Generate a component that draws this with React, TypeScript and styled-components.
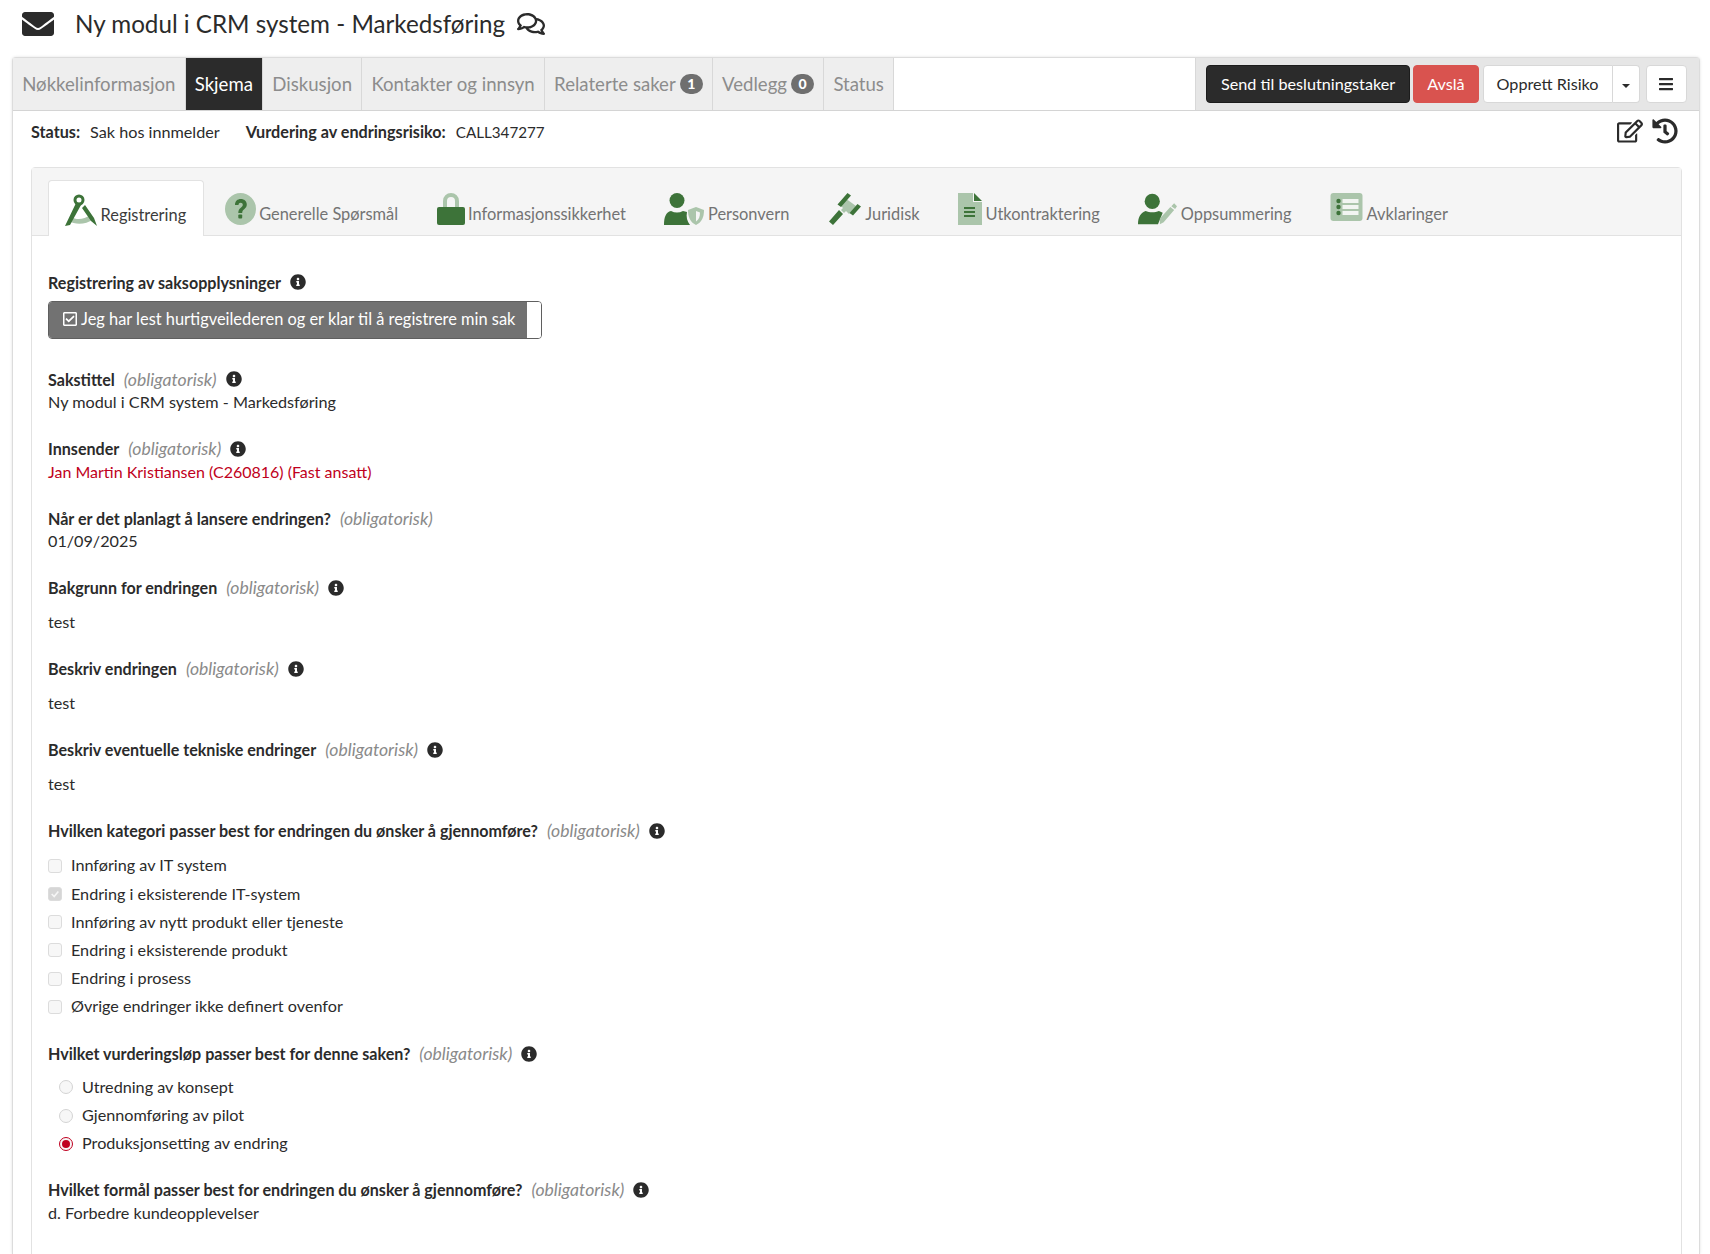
import React from "react";
import styled, { createGlobalStyle } from "styled-components";
import {
  FaBars,
  FaEnvelope,
  FaHistory,
  FaInfoCircle,
  FaRegCheckSquare,
  FaRegComments,
  FaRegEdit,
} from "react-icons/fa";

const DARK = "#3d7339";
const LIGHT = "#abc5ab";

const GlobalStyle = createGlobalStyle`
  html, body {
    margin: 0;
    height: 100%;
    overflow: hidden;
    background: #fff;
  }
  body {
    font-family: "Lato", "Open Sans", sans-serif;
    font-size: 16.2px;
    color: #2b2b2b;
  }
  * {
    box-sizing: border-box;
  }
`;

const Page = styled.div`
  height: 1254px;
  overflow: hidden;
  padding: 0 10px 0 12px;
`;

const TitleRow = styled.header`
  height: 57px;
  display: flex;
  align-items: center;
  padding: 0 0 10px 10px;
`;

const MailIcon = styled(FaEnvelope)`
  width: 32px;
  height: 32px;
  margin-right: 21px;
  color: #2b2b2b;
`;

const Title = styled.h1`
  margin: 0;
  font-size: 24.2px;
  font-weight: 400;
`;

const ChatIcon = styled(FaRegComments)`
  width: 28px;
  height: 28px;
  margin-left: 12px;
`;

const Panel = styled.section`
  height: 1197px;
  border: 1px solid #dcdcdc;
  border-bottom: 0;
  border-radius: 4px 4px 0 0;
  box-shadow: 0 0 3px rgba(0, 0, 0, 0.12);
`;

const TopBar = styled.div`
  height: 53px;
  display: flex;
  justify-content: space-between;
  border-bottom: 1px solid #d4d4d4;
`;

const TopTabs = styled.nav`
  display: flex;
`;

const TopTab = styled.div<{ $active?: boolean }>`
  display: flex;
  align-items: center;
  gap: 4px;
  padding: 0 9.2px 1px;
  font-size: 18.6px;
  border-right: 1px solid #d8d8d8;
  color: ${(p) => (p.$active ? "#fff" : "#8c8c8c")};
  background: ${(p) => (p.$active ? "#2b2b2b" : "#eeeeee")};
`;

const Count = styled.span`
  width: 23px;
  height: 20px;
  border-radius: 10px;
  display: flex;
  align-items: center;
  justify-content: center;
  background: #6f6f6f;
  color: #fff;
  font-size: 14px;
  font-weight: 900;
`;

const Toolbar = styled.div`
  width: 504px;
  display: flex;
  align-items: center;
  gap: 3px;
  padding-left: 10px;
  background: #e6e6e6;
  border-left: 1px solid #d8d8d8;
`;

const ActionButton = styled.button<{ $tone?: "dark" | "red" }>`
  height: 38px;
  padding: 0 14px 2px;
  font: inherit;
  border-radius: 4px;
  border: 1px solid ${(p) => (p.$tone === "dark" ? "#1c1c1c" : p.$tone === "red" ? "#d9534f" : "#d8d8d8")};
  background: ${(p) => (p.$tone === "dark" ? "#2b2b2b" : p.$tone === "red" ? "#d9534f" : "#fff")};
  color: ${(p) => (p.$tone ? "#fff" : "#2b2b2b")};
`;

const RejectButton = styled(ActionButton)`
  padding: 0 13px 2px;
`;

const SplitGroup = styled.div`
  display: flex;
  margin-left: 1px;
  margin-right: 3px;
`;

const SplitMain = styled(ActionButton)`
  padding: 0 13px 2px;
  border-radius: 4px 0 0 4px;
`;

const CaretButton = styled(ActionButton)`
  width: 27px;
  padding: 0;
  border-left: 0;
  border-radius: 0 4px 4px 0;
  display: flex;
  align-items: center;
  justify-content: center;
  &::after {
    content: "";
    border-top: 4px solid #2b2b2b;
    border-left: 4px solid transparent;
    border-right: 4px solid transparent;
    margin-top: 3px;
  }
`;

const MenuButton = styled(ActionButton)`
  width: 41px;
  padding: 0;
  display: flex;
  align-items: center;
  justify-content: center;
  svg {
    width: 16px;
    height: 16px;
  }
`;

const Body = styled.div`
  padding: 0 17px 0 18px;
`;

const StatusRow = styled.div`
  height: 56px;
  display: flex;
  align-items: flex-start;
  justify-content: space-between;
`;

const StatusItems = styled.div`
  display: flex;
  gap: 26px;
  padding: 11px 0 0 0;
`;

const StatusItem = styled.span`
  b {
    font-weight: 700;
    margin-right: 10px;
  }
`;

const CaseCode = styled.span`
  font-size: 15.2px;
`;

const StatusIcons = styled.div`
  display: flex;
  gap: 9px;
  padding: 7px 0 0 0;
  margin-right: 4px;
  svg {
    width: 26px;
    height: 26px;
  }
`;

const FormCard = styled.div`
  height: 1100px;
  border: 1px solid #e2e2e2;
  border-radius: 4px 4px 0 0;
`;

const FormTabs = styled.nav`
  height: 68px;
  padding: 12px 0 0 16px;
  display: flex;
  gap: 4px;
  background: #f5f5f5;
  border-bottom: 1px solid #e2e2e2;
`;

const FormTab = styled.div<{ $active?: boolean }>`
  height: ${(p) => (p.$active ? "56px" : "55px")};
  padding: 0 16.500px 12.500px 16px;
  display: flex;
  align-items: flex-end;
  gap: 3.500px;
  font-size: 16.4px;
  color: ${(p) => (p.$active ? "#3c3c3c" : "#737373")};
  background: ${(p) => (p.$active ? "#fff" : "transparent")};
  border: 1px solid ${(p) => (p.$active ? "#e2e2e2" : "transparent")};
  border-bottom: 0;
  border-radius: 4px 4px 0 0;
  svg {
    flex: none;
    height: 32px;
    margin-bottom: -2.500px;
  }
`;

const FormBody = styled.div`
  padding: 34px 16px 0;
`;

const Field = styled.div<{ $gap?: number }>`
  margin-bottom: ${(p) => p.$gap ?? 23.6}px;
`;

const Label = styled.div`
  height: 24px;
  display: flex;
  align-items: center;
  font-weight: 700;
  font-size: 16.1px;
`;

const Required = styled.i`
  margin-left: 9px;
  font-size: 17.6px;
  font-weight: 400;
  color: #8a8a8a;
`;

const InfoIcon = styled(FaInfoCircle)`
  width: 16px;
  height: 16px;
  margin-left: 9px;
  color: #2b2b2b;
`;

const Value = styled.div<{ $danger?: boolean; $spaced?: boolean }>`
  line-height: 22px;
  margin-top: ${(p) => (p.$spaced ? "11.3px" : "0")};
  font-size: ${(p) => (p.$danger ? "16px" : "inherit")};
  color: ${(p) => (p.$danger ? "#c00020" : "inherit")};
`;

const ConfirmButton = styled.div`
  margin-top: 7px;
  width: 494px;
  height: 38px;
  display: flex;
  border-radius: 4px;
  border: 1px solid #5f5f5f;
  overflow: hidden;
`;

const ConfirmText = styled.div`
  flex: 1;
  display: flex;
  align-items: center;
  gap: 3px;
  padding: 0 0 3px 13px;
  font-size: 16.4px;
  background: #727272;
  color: #fff;
  svg {
    width: 16px;
    height: 16px;
  }
`;

const ConfirmSpace = styled.div`
  width: 14px;
  background: #fff;
`;

const OptionList = styled.div<{ $indent?: boolean }>`
  margin-top: ${(p) => (p.$indent ? "6.5px" : "8px")};
  padding-left: ${(p) => (p.$indent ? "11px" : "0")};
`;

const Option = styled.div`
  height: 28.2px;
  display: flex;
  align-items: center;
  gap: 9px;
`;

const Box = styled.span<{ $checked?: boolean }>`
  width: 14px;
  height: 14px;
  margin-top: 2px;
  border-radius: 3px;
  border: 1px solid #dcdcdc;
  background: ${(p) => (p.$checked ? "#d6d6d6" : "#f7f7f7")};
  display: flex;
  align-items: center;
  justify-content: center;
`;

const Radio = styled.span<{ $checked?: boolean }>`
  width: 14px;
  height: 14px;
  margin-top: 2px;
  border-radius: 50%;
  border: 1px solid ${(p) => (p.$checked ? "#c00020" : "#d4d4d4")};
  background: #f7f7f7;
  display: flex;
  align-items: center;
  justify-content: center;
  &::after {
    content: "";
    display: ${(p) => (p.$checked ? "block" : "none")};
    width: 8px;
    height: 8px;
    border-radius: 50%;
    background: #c00020;
  }
`;

const CompassIcon = () => (
  <svg viewBox="0 0 32 32" width="32">
    <path d="M6 23c5 3 13 3 19-2l3 4c-7 6-18 6-24 2z" fill={LIGHT} />
    <circle cx="14" cy="6" r="4" fill="none" stroke={DARK} strokeWidth="3" />
    <path d="M11 9l5 2L5 31l-5 1zM17 14l3-3 9 13 3 8-6-5z" fill={DARK} />
  </svg>
);

const QuestionIcon = () => (
  <svg viewBox="0 0 31 32" width="31">
    <ellipse cx="15.500" cy="16" rx="15.500" ry="16" fill={LIGHT} />
    <path
      d="M10 12c0-4 2.500-6 5.800-6s6 2.200 6 5.500c0 4.500-4.600 4.500-4.600 8.500h-3.900c0-5.500 4.500-5.500 4.500-8.300 0-1.200-.9-2-2.100-2-1.300 0-2.100.9-2.200 2.300z"
      fill={DARK}
    />
    <rect x="13.300" y="21.500" width="3.900" height="4" rx="1" fill={DARK} />
  </svg>
);

const LockIcon = () => (
  <svg viewBox="0 0 28 32" width="28">
    <path d="M6 14V8a8 8 0 0 1 16 0v6h-4V8a4 4 0 0 0-8 0v6z" fill={LIGHT} />
    <rect y="14" width="28" height="18" rx="2" fill={DARK} />
  </svg>
);

const PrivacyIcon = () => (
  <svg viewBox="0 0 40 32" width="40">
    <ellipse cx="13" cy="7.500" rx="7.500" ry="7.500" fill={DARK} />
    <path d="M0 32c0-8 2-13 7-14 4 2 8 2 12 0l4 1c-1 5 0 9 3 13z" fill={DARK} />
    <path d="M32 14l8 3c0 7-2 12-8 15-6-3-8-8-8-15z" fill={LIGHT} />
    <path d="M32 18l4 1.500c0 4-1 7-4 9z" fill="#f5f5f5" />
  </svg>
);

const GavelIcon = () => (
  <svg viewBox="0 0 32 32" width="34">
    <path d="M16 5l11 8-7 8-9-9z" fill={LIGHT} />
    <path d="M12 17l3-3 3 3-3 3z" fill={LIGHT} />
    <path d="M18.500 0l3.500 2.500-10 11.500-3.500-2.500zM28.500 11l3.500 2.500-8 9-3.500-2.500zM10 17l4 4-10 11-4-3.500z" fill={DARK} />
  </svg>
);

const DocumentIcon = () => (
  <svg viewBox="0 0 24 32" width="24">
    <path d="M0 0h15v9h9v23H0z" fill={LIGHT} />
    <path d="M16 0l8 8h-8z" fill={DARK} />
    <path d="M6 14h11v2H6zM6 18h11v2H6zM6 22h11v2H6z" fill={DARK} />
  </svg>
);

const SummaryIcon = () => (
  <svg viewBox="0 0 41 32" width="39">
    <ellipse cx="15" cy="8" rx="8" ry="8" fill={DARK} />
    <path d="M0 32c0-8 3-12 8-14 4 2 10 2 14 0l4 2-5 12z" fill={DARK} />
    <path d="M23 32l0-6 11-12 4 3-11 13zM35 13l3-3 3 3-2 3z" fill={LIGHT} />
  </svg>
);

const ListSvg = styled.svg`
  && {
    align-self: flex-start;
    height: 28px;
    margin: 12px 0 0;
  }
`;

const ListIcon = () => (
  <ListSvg viewBox="0 0 32 28" width="33">
    <rect width="32" height="28" rx="3" fill={LIGHT} />
    <circle cx="8" cy="8" r="2.200" fill={DARK} />
    <circle cx="8" cy="14" r="2.200" fill={DARK} />
    <circle cx="8" cy="20" r="2.200" fill={DARK} />
    <path d="M12 6h16v4H12zM12 12h16v4H12zM12 18h16v4H12z" fill="#f2f5f2" />
  </ListSvg>
);

const formTabs = [
  { label: "Registrering", icon: <CompassIcon />, active: true },
  { label: "Generelle Spørsmål", icon: <QuestionIcon /> },
  { label: "Informasjonssikkerhet", icon: <LockIcon /> },
  { label: "Personvern", icon: <PrivacyIcon /> },
  { label: "Juridisk", icon: <GavelIcon /> },
  { label: "Utkontraktering", icon: <DocumentIcon /> },
  { label: "Oppsummering", icon: <SummaryIcon /> },
  { label: "Avklaringer", icon: <ListIcon /> },
];

const categories = [
  "Innføring av IT system",
  "Endring i eksisterende IT-system",
  "Innføring av nytt produkt eller tjeneste",
  "Endring i eksisterende produkt",
  "Endring i prosess",
  "Øvrige endringer ikke definert ovenfor",
];

const tracks = ["Utredning av konsept", "Gjennomføring av pilot", "Produksjonsetting av endring"];

const FieldLabel = ({ text, required, info }: { text: string; required?: boolean; info?: boolean }) => (
  <Label>
    {text}
    {required && <Required>(obligatorisk)</Required>}
    {info && <InfoIcon />}
  </Label>
);

const App = (): React.ReactElement => (
  <Page>
    <GlobalStyle />
    <TitleRow>
      <MailIcon />
      <Title>Ny modul i CRM system - Markedsføring</Title>
      <ChatIcon />
    </TitleRow>
    <Panel>
      <TopBar>
        <TopTabs>
          <TopTab>Nøkkelinformasjon</TopTab>
          <TopTab $active>Skjema</TopTab>
          <TopTab>Diskusjon</TopTab>
          <TopTab>Kontakter og innsyn</TopTab>
          <TopTab>
            Relaterte saker <Count>1</Count>
          </TopTab>
          <TopTab>
            Vedlegg <Count>0</Count>
          </TopTab>
          <TopTab>Status</TopTab>
        </TopTabs>
        <Toolbar>
          <ActionButton $tone="dark">Send til beslutningstaker</ActionButton>
          <RejectButton $tone="red">Avslå</RejectButton>
          <SplitGroup>
            <SplitMain>Opprett Risiko</SplitMain>
            <CaretButton aria-label="Flere valg" />
          </SplitGroup>
          <MenuButton aria-label="Meny">
            <FaBars />
          </MenuButton>
        </Toolbar>
      </TopBar>
      <Body>
        <StatusRow>
          <StatusItems>
            <StatusItem>
              <b>Status:</b>Sak hos innmelder
            </StatusItem>
            <StatusItem>
              <b>Vurdering av endringsrisiko:</b>
              <CaseCode>CALL347277</CaseCode>
            </StatusItem>
          </StatusItems>
          <StatusIcons>
            <FaRegEdit />
            <FaHistory />
          </StatusIcons>
        </StatusRow>
        <FormCard>
          <FormTabs>
            {formTabs.map((tab) => (
              <FormTab key={tab.label} $active={tab.active}>
                {tab.icon}
                {tab.label}
              </FormTab>
            ))}
          </FormTabs>
          <FormBody>
            <Field $gap={28}>
              <FieldLabel text="Registrering av saksopplysninger" info />
              <ConfirmButton>
                <ConfirmText>
                  <FaRegCheckSquare />
                  Jeg har lest hurtigveilederen og er klar til å registrere min sak
                </ConfirmText>
                <ConfirmSpace />
              </ConfirmButton>
            </Field>
            <Field>
              <FieldLabel text="Sakstittel" required info />
              <Value>Ny modul i CRM system - Markedsføring</Value>
            </Field>
            <Field>
              <FieldLabel text="Innsender" required info />
              <Value $danger>Jan Martin Kristiansen (C260816) (Fast ansatt)</Value>
            </Field>
            <Field>
              <FieldLabel text="Når er det planlagt å lansere endringen?" required />
              <Value>01/09/2025</Value>
            </Field>
            <Field $gap={23.7}>
              <FieldLabel text="Bakgrunn for endringen" required info />
              <Value $spaced>test</Value>
            </Field>
            <Field $gap={23.7}>
              <FieldLabel text="Beskriv endringen" required info />
              <Value $spaced>test</Value>
            </Field>
            <Field $gap={23.7}>
              <FieldLabel text="Beskriv eventuelle tekniske endringer" required info />
              <Value $spaced>test</Value>
            </Field>
            <Field $gap={22}>
              <FieldLabel text="Hvilken kategori passer best for endringen du ønsker å gjennomføre?" required info />
              <OptionList>
                {categories.map((category, index) => (
                  <Option key={category}>
                    <Box $checked={index === 1}>
                      {index === 1 && (
                        <svg viewBox="0 0 12 12" width="10" height="10">
                          <path d="M2 6l3 3 5-6" fill="none" stroke="#f5f5f5" strokeWidth="2" />
                        </svg>
                      )}
                    </Box>
                    {category}
                  </Option>
                ))}
              </OptionList>
            </Field>
            <Field $gap={21}>
              <FieldLabel text="Hvilket vurderingsløp passer best for denne saken?" required info />
              <OptionList $indent>
                {tracks.map((track, index) => (
                  <Option key={track}>
                    <Radio $checked={index === 2} />
                    {track}
                  </Option>
                ))}
              </OptionList>
            </Field>
            <Field>
              <FieldLabel text="Hvilket formål passer best for endringen du ønsker å gjennomføre?" required info />
              <Value>d. Forbedre kundeopplevelser</Value>
            </Field>
          </FormBody>
        </FormCard>
      </Body>
    </Panel>
  </Page>
);

export default App;
